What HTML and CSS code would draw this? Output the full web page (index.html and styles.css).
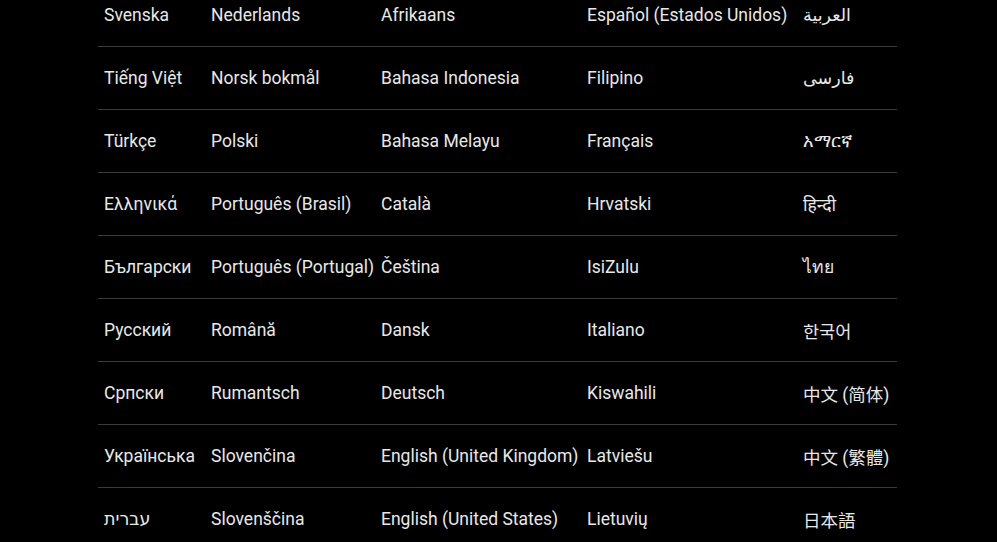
FILE: index.html
```html
<html>
<head>
<title>Language</title>
<link rel="stylesheet" href="styles.css">
</head>
<body>
<div id="Picker">
<div class="lang">Svenska</div><div class="lang">Nederlands</div><div class="lang">Afrikaans</div><div class="lang">Español (Estados Unidos)</div><div class="lang">العربية</div>
<div class="lang">Tiếng Việt</div><div class="lang">Norsk bokmål</div><div class="lang">Bahasa Indonesia</div><div class="lang">Filipino</div><div class="lang">فارسی</div>
<div class="lang">Türkçe</div><div class="lang">Polski</div><div class="lang">Bahasa Melayu</div><div class="lang">Français</div><div class="lang">አማርኛ</div>
<div class="lang">Ελληνικά</div><div class="lang">Português (Brasil)</div><div class="lang">Català</div><div class="lang">Hrvatski</div><div class="lang">हिन्दी</div>
<div class="lang">Български</div><div class="lang">Português (Portugal)</div><div class="lang">Čeština</div><div class="lang">IsiZulu</div><div class="lang">ไทย</div>
<div class="lang">Русский</div><div class="lang">Română</div><div class="lang">Dansk</div><div class="lang">Italiano</div><div class="lang">한국어</div>
<div class="lang">Српски</div><div class="lang">Rumantsch</div><div class="lang">Deutsch</div><div class="lang">Kiswahili</div><div class="lang">中文 (简体)</div>
<div class="lang">Українська</div><div class="lang">Slovenčina</div><div class="lang">English (United Kingdom)</div><div class="lang">Latviešu</div><div class="lang">中文 (繁體)</div>
<div class="lang">עברית</div><div class="lang">Slovenščina</div><div class="lang">English (United States)</div><div class="lang">Lietuvių</div><div class="lang">日本語</div>
</div>
</body>
</html>
```

FILE: styles.css
```css
body { margin:0; background:#000; color:#e8e8e8; font-family:Roboto, "Noto Sans", "DejaVu Sans", "Noto Sans CJK SC", sans-serif; font-size:17.5px; overflow:hidden; }
#Picker { display:grid; grid-template-columns:107px 170px 206px 216px 100px; margin:-16px 0 0 98px; }
.lang { height:62px; border-bottom:1px solid #3a3a3a; padding-left:6px; display:flex; align-items:center; white-space:nowrap; }
```
